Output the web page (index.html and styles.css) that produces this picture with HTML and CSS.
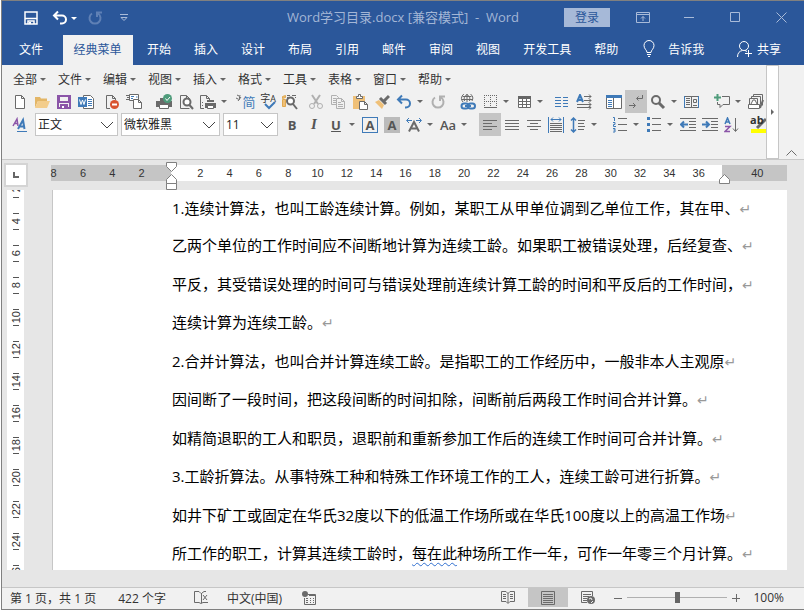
FILE: index.html
```
<!DOCTYPE html>
<html lang="zh-CN">
<head>
  <meta charset="utf-8">
  <title>Word学习目录.docx [兼容模式] - Word</title>
  <link rel="stylesheet" href="styles.css">
</head>

<body>
<div class="window">

  <header class="titlebar">
    <div class="quick">
      <button class="qbtn" aria-label="保存"><svg width="16" height="16"><path d="M2 2h12v12H2zM2 8.500h12M5 14v-3h6v3" stroke-width="1.500"/><path d="M6 12h2v2H6z" fill="#fff" stroke="none"/></svg></button>
      <button class="qbtn undo" aria-label="撤消"><svg width="16" height="16"><path d="M2 5.500h8a4 4 0 0 1 0 8H8M6 1.500L2 5.500l4 4" stroke-width="2"/></svg><i class="caret"></i></button>
      <button class="qbtn dim" aria-label="重复"><svg width="16" height="16"><path d="M5 3.500a5.500 5.500 0 1 0 6 0M10 7V2.500h5" stroke-width="2"/></svg></button>
      <button class="qbtn custom" aria-label="自定义快速访问工具栏"><svg width="10" height="8"><path d="M1 .5h8M2 3.500l3 3 3-3z"/></svg></button>
    </div>
    <h1>Word学习目录.docx [兼容模式] &nbsp;-&nbsp; Word</h1>
    <div class="winbtns">
      <button class="login">登录</button>
      <button class="wbtn" aria-label="功能区显示选项"><svg width="14" height="11"><path d="M.5.5h13v10H.500zM.5 2.500h13M7 9V4.500M5 6.500l2-2 2 2"/></svg></button>
      <button class="wbtn" aria-label="最小化"><svg width="11" height="11"><path d="M0 5.500h10"/></svg></button>
      <button class="wbtn" aria-label="最大化"><svg width="11" height="11"><path d="M.5.500h9v9h-9z"/></svg></button>
      <button class="wbtn" aria-label="关闭"><svg width="11" height="11"><path d="M.5.500l10 10M10.500.500l-10 10"/></svg></button>
    </div>
  </header>

  <nav class="tabs">
    <button class="tab file">文件</button>
    <button class="tab active">经典菜单</button>
    <button class="tab">开始</button>
    <button class="tab">插入</button>
    <button class="tab">设计</button>
    <button class="tab">布局</button>
    <button class="tab">引用</button>
    <button class="tab">邮件</button>
    <button class="tab">审阅</button>
    <button class="tab">视图</button>
    <button class="tab">开发工具</button>
    <button class="tab">帮助</button>
    <button class="tab tell"><svg width="12" height="18"><path d="M4 12.500C4 10 1 9 1 5.500a5 5 0 0 1 10 0C11 9 8 10 8 12.500zM4 14.500h4M5 16.500h2"/></svg>告诉我</button>
    <button class="tab share"><svg width="16" height="16"><circle cx="7" cy="5" r="4.500"/><path d="M.5 16c0-4 2-6 5-6.500M8 9.500l2 1M8 12.500h7M11.500 9v7"/></svg>共享</button>
  </nav>

  <div class="ribbon">
    <div class="bars">
      <div class="menus">
        <button>全部<i class="caret"></i></button>
        <button>文件<i class="caret"></i></button>
        <button>编辑<i class="caret"></i></button>
        <button>视图<i class="caret"></i></button>
        <button>插入<i class="caret"></i></button>
        <button>格式<i class="caret"></i></button>
        <button>工具<i class="caret"></i></button>
        <button>表格<i class="caret"></i></button>
        <button>窗口<i class="caret"></i></button>
        <button>帮助<i class="caret"></i></button>
      </div>

      <div class="toolrow">
        <button class="tool" aria-label="新建"><svg class="icon"><path d="M3.500 1.500h6l3 3v10h-9zM9.500 1.500v3h3" class="w"/></svg></button>
        <button class="tool" aria-label="打开"><svg class="icon"><path d="M1 14V3h5l1 1.500h6V7H4z" fill="#e3b667" stroke="none"/><path d="M4 7h12l-3 7H1z" fill="#f3cd8c" stroke="none"/></svg></button>
        <button class="tool" aria-label="保存"><svg class="icon"><path d="M2 2h12v12H2z" fill="#f1f1f1" stroke="#8b55a8" stroke-width="2"/><path d="M2 7h12v2H2zM4 10h8v5H4zM3 3h1v5H3zM12 3h1v5h-1z" fill="#8b55a8" stroke="none"/><path d="M6 12h2v2H6z" fill="#fff" stroke="none"/></svg></button>
        <button class="tool" aria-label="另存为 Word"><svg class="icon"><path d="M5.500 1.500h7l3 3v10h-10z" class="w"/><path d="M10 5.500h4M10 7.500h4M10 9.500h4M10 11.500h4" class="b"/><path d="M0 3h9v10H0z" class="bf"/><path d="M1.500 5.500L3 10.500 4.500 6 6 10.500l1.500-5" stroke="#fff"/></svg></button>
        <i class="sep"></i>
        <button class="tool" aria-label="关闭文档"><svg class="icon"><path d="M2.500 14.500v-13h6l3 3V6M2.500 14.500H6M8.500 1.500v3h3"/><circle cx="10.500" cy="10.500" r="4.500" fill="#d9532f" stroke="none"/><path d="M8 10.500h5" stroke="#fff" stroke-width="2"/></svg></button>
        <button class="tool" aria-label="发送邮件"><svg class="icon"><path d="M3.500.500h9v6h-9z" class="w"/><path d="M0 1.500h3M1 3.500h2M0 5.500h3"/><path d="M5 2.500h3M5 4.500h2M10 3h1.500" class="b"/><path d="M7.500 5.500h5l3 3v6h-8z" class="w"/><path d="M12.500 5.500v3h3"/></svg></button>
        <i class="sep wide"></i>
        <button class="tool" aria-label="快速打印"><svg class="icon"><path d="M4 4h5v3H4zM0 7h16v6H0z" fill="#6a6a6a" stroke="none"/><path d="M3.500 10.500h9v4h-9z" class="w"/><circle cx="11.500" cy="4.500" r="4.500" fill="#4f9c7b" stroke="none"/><path d="M9.500 4.500l1.500 2 3-3.500" stroke="#fff"/></svg></button>
        <button class="tool" aria-label="打印预览"><svg class="icon"><path d="M11.500 14.500h-9v-13h6l3 3V6M8.500 1.500v3h3"/><circle cx="9" cy="8" r="3.500" class="w" stroke-width="2"/><path d="M11.500 11l3.500 4" stroke-width="2"/></svg></button>
        <button class="tool" aria-label="打印"><svg class="icon"><path d="M4 14.500H.500v-13h6l3 3V6M6.500 1.500v3h3"/><path d="M5 9h11v5H5zM7 6h7v2H7z" fill="#6a6a6a" stroke="none"/><path d="M7.500 11.500h6v3h-6z" class="w"/><path d="M2 8.500h2M2 11.500h2" stroke-dasharray="1 1"/></svg></button>
        <button class="drop" aria-label="打印选项"><i class="caret"></i></button>
        <i class="sep"></i>
        <button class="tool jian" aria-label="简繁转换"><svg class="icon small"><path d="M1 1l2 1M0 4l2 1M4 1l-1 5M5 3l-3 4"/></svg><b>简</b></button>
        <button class="tool spell" aria-label="拼写检查"><b>字<small>A</small></b><svg class="check" width="12" height="9"><path d="M1 3l4 4 6-6" class="b" stroke-width="2"/></svg></button>
        <button class="tool" aria-label="信息检索"><svg class="icon"><path d="M.5 5.500h3v7h-3zM.5 2.500l3-1v2l-3 1z" fill="#efc078" stroke="#e0a950"/><path d="M5 1.500h3M10 1.500h4M5 3.500h1M13 3.500h1"/><circle cx="8.500" cy="7" r="3.500" class="w" stroke-width="2"/><path d="M11 10l4 5" stroke-width="2"/></svg></button>
        <i class="sep"></i>
        <button class="tool" aria-label="剪切"><svg class="icon pale"><path d="M4 1l6 9M12 1l-6 9" stroke-width="2"/><circle cx="4" cy="12" r="2.500"/><circle cx="12" cy="12" r="2.500"/></svg></button>
        <button class="tool" aria-label="复制"><svg class="icon pale"><path d="M6 10.500H1.500v-9h5l2 2V5"/><path d="M6.500 4.500h5l3 3v7h-8zM11.500 4.500v3h3"/><path d="M3 4.500h3M3 6.500h3M3 8.500h3M8 8.500h3M8 10.500h5M8 12.500h5"/></svg></button>
        <button class="tool" aria-label="粘贴"><svg class="icon"><path d="M1 2h12v13H1z" fill="#efc078" stroke="none"/><path d="M4.500 4.500v-2h2v-2h2v2h2v2z" class="w"/><path d="M7.500 7.500h5l3 3v5h-8zM12.500 7.500v3h3" class="w"/></svg></button>
        <button class="tool" aria-label="格式刷"><svg class="icon"><path d="M1 8l4-2 5 5-2 4z" fill="#efc078" stroke="none"/><path d="M6 4l6 6M10 7l5-5" stroke-width="3"/></svg></button>
        <button class="tool" aria-label="撤消"><svg class="icon"><path d="M2 5.500h8a4 4 0 0 1 0 8H9M6 1.500L2 5.500l4 4" class="b" stroke-width="2"/></svg></button>
        <button class="drop" aria-label="撤消列表"><i class="caret"></i></button>
        <button class="tool" aria-label="重复"><svg class="icon pale"><path d="M5 3.500a5.500 5.500 0 1 0 6 0M10 7V2.500h5" stroke-width="2"/></svg></button>
        <i class="sep wide"></i>
        <button class="tool" aria-label="超链接"><svg class="icon"><path d="M3 8a5.500 5.500 0 1 1 9-1M1.500 5.500h11M2.500 2.500h9M7 0v8M4.500 7c-1-3 0-5 2.500-6.500C9.500 2 10.500 4 9.500 7"/><rect x="1.500" y="9.500" width="7" height="5" rx="2.500" class="b" stroke-width="2"/><rect x="8" y="9.500" width="7" height="5" rx="2.500" class="b" stroke-width="2"/><path d="M5 12h6" class="b" stroke-width="2"/></svg></button>
        <button class="tool" aria-label="边框"><svg class="icon"><path d="M2 1.500h13M2 7.500h13M2.500 1v11M8.500 1v11M14.500 1v11" stroke-dasharray="1 1"/><path d="M2 13.500h13"/></svg></button>
        <button class="drop" aria-label="边框选项"><i class="caret"></i></button>
        <button class="tool" aria-label="表格"><svg class="icon"><path d="M2.500 2.500h12v11h-12z" class="w"/><path d="M2 2h13v3H2z" fill="#666" stroke="none"/><path d="M2.500 7.500h12M2.500 10.500h12M6.500 5v8M10.500 5v8"/></svg></button>
        <button class="drop" aria-label="表格选项"><i class="caret"></i></button>
        <i class="sep"></i>
        <button class="tool" aria-label="分栏"><svg class="icon"><path d="M1 3.500h6M9 3.500h5M1 6.500h6M9 6.500h5M1 9.500h6M9 9.500h5M1 12.500h6M9 12.500h5" class="b"/></svg></button>
        <button class="tool" aria-label="文字方向"><svg class="icon"><path d="M1 8l3-7 3 7M2 6h4" class="b" stroke-width="2"/><path d="M8 2.500h7M8 6.500h7M1 10.500h14M1 13.500h14M13 .500l2 2-2 2M13 4.500l2 2-2 2M13 8.500l2 2-2 2M13 12l2 1.500-2 2"/></svg></button>
        <i class="sep wide"></i>
        <button class="tool" aria-label="导航窗格"><svg class="icon"><path d="M.5 1.500h15v13H.500z" class="w"/><path d="M0 1h16v3H0z" class="bf"/><path d="M2 6.500h4M2 8.500h4M2 10.500h4M2 12.500h4" class="b"/><path d="M7.500 4v10"/></svg></button>
        <button class="tool on" aria-label="显示编辑标记"><svg class="icon"><path d="M14.500 1v3.500H9M10.500 2.500l-2 2 2 2M1 11.500h6M5 9l2.500 2.500L5 14"/></svg></button>
        <button class="tool" aria-label="显示比例"><svg class="icon"><circle cx="6" cy="6" r="4" stroke-width="2"/><path d="M9 9l5 5" stroke-width="3"/></svg></button>
        <button class="drop" aria-label="显示比例选项"><i class="caret"></i></button>
        <button class="tool" aria-label="多页"><svg class="icon"><path d="M.5 2.500h7v11h-7zM7.500 2.500h7v11h-7z"/><path d="M.5 2v12M14.500 2v12" class="b"/><path d="M2 4.500h4M2 6.500h4M2 8.500h4M2 10.500h4M9 11.500h4M9.500 5.500h3v3h-3z"/></svg></button>
        <i class="sep wide"></i>
        <button class="tool" aria-label="新建批注"><svg class="icon"><path d="M8 2.500h7.500v8H9l-3 3v-3H3.500V8"/><path d="M0 3.500h7M3.500 0v7" stroke="#4f9c7b" stroke-width="2"/></svg></button>
        <button class="drop" aria-label="批注选项"><i class="caret"></i></button>
        <button class="tool" aria-label="切换窗口"><svg class="icon"><path d="M5.500 2.500v-2h9v11M3.500 4.500v-2h9v8M1.500 10V4.500h8V10"/><path d="M.5 10.500h11v4H.500zM3 10l2-4h2l2 4" class="w"/><path d="M15 6l-3 8" stroke-width="2"/></svg></button>
      </div>

      <div class="toolrow">
        <button class="tool" aria-label="样式"><svg class="icon"><path d="M1 9l4-7 1 7M3 6.500h3" stroke="#8b55a8" stroke-width="1.500"/><path d="M6 12l5-9 1.500 9M8 9.500h4" class="b" stroke-width="2"/><path d="M5 14.500h10" class="b"/></svg></button>
        <i class="sep"></i>
        <select class="style-box" aria-label="样式"><option>正文</option></select>
        <select class="font-box" aria-label="字体"><option>微软雅黑</option></select>
        <select class="size-box" aria-label="字号"><option>11</option></select>
        <button class="tool letter bold">B</button>
        <button class="tool letter ital">I</button>
        <button class="tool letter under">U</button>
        <button class="drop" aria-label="下划线选项"><i class="caret"></i></button>
        <button class="tool letter"><span class="boxed">A</span></button>
        <button class="tool letter"><span class="shaded">A</span></button>
        <button class="tool" aria-label="字符缩放"><svg class="icon"><path d="M3 14.500L8 5l5 9.500M5 11.500h6" stroke-width="2"/><path d="M1 3.500h5M3 1L.500 3.500 3 6M10 3.500h5M13 1l2.500 2.500L13 6" class="b"/></svg></button>
        <button class="drop" aria-label="字符缩放选项"><i class="caret"></i></button>
        <button class="tool letter case">Aa</button>
        <button class="drop" aria-label="大小写选项"><i class="caret"></i></button>
        <i class="sep wide"></i>
        <button class="tool on" aria-label="左对齐"><svg class="icon"><path d="M1 3.500h14M1 6.500h9M1 9.500h14M1 12.500h9"/></svg></button>
        <button class="tool" aria-label="两端对齐"><svg class="icon"><path d="M1 3.500h14M1 6.500h14M1 9.500h14M1 12.500h14"/></svg></button>
        <button class="tool" aria-label="居中"><svg class="icon"><path d="M1 3.500h14M4 6.500h8M1 9.500h14M4 12.500h8"/></svg></button>
        <button class="tool" aria-label="分散对齐"><svg class="icon"><path d="M.5 0v16M15.500 0v16M3 2.500h10M5 .500L3 2.500l2 2M11 .500l2 2-2 2" class="b"/><path d="M2 6.500h12M2 8.500h12M2 10.500h12M2 12.500h12M2 14.500h12"/></svg></button>
        <button class="tool" aria-label="行距"><svg class="icon"><path d="M3.500 1v14M1 3.500L3.500 1 6 3.500M1 12.500L3.500 15 6 12.500" class="b" stroke-width="1.500"/><path d="M8 3.500h7M8 6.500h6M8 9.500h7M8 12.500h6"/></svg></button>
        <button class="drop" aria-label="行距选项"><i class="caret"></i></button>
        <i class="sep wide"></i>
        <button class="tool" aria-label="编号"><svg class="icon"><path d="M6 1.500h9M6 7.500h9M6 13.500h9"/><path d="M1 .5h1.500V4M1 5.500h2v2H1.500v2H4M1 11.500h2v3.500H1M1.500 13H3" class="b"/></svg></button>
        <button class="drop" aria-label="编号选项"><i class="caret"></i></button>
        <button class="tool" aria-label="项目符号"><svg class="icon"><path d="M6 1.500h9M6 7.500h9M6 13.500h9"/><path d="M1 0h3v3H1zM1 6h3v3H1zM1 12h3v3H1z" class="bf"/></svg></button>
        <button class="drop" aria-label="项目符号选项"><i class="caret"></i></button>
        <button class="tool" aria-label="减少缩进"><svg class="icon"><path d="M0 1.500h16M9 4.500h7M9 7.500h7M9 10.500h7M0 13.500h16"/><path d="M1 7.500h7M4 4.500l-3 3 3 3" class="b" stroke-width="2"/></svg></button>
        <button class="tool" aria-label="增加缩进"><svg class="icon"><path d="M0 1.500h16M9 4.500h7M9 7.500h7M9 10.500h7M0 13.500h16"/><path d="M0 7.500h7M4 4.500l3 3-3 3" class="b" stroke-width="2"/></svg></button>
        <button class="tool" aria-label="排序"><svg class="icon"><path d="M1 7l2.500-6L6 7M2 5h3" class="b" stroke-width="1.500"/><path d="M1 9.500h5l-5 5h5" stroke="#8b55a8" stroke-width="1.500"/><path d="M11.500 1v13M9 11.500l2.500 3 2.500-3"/></svg></button>
        <i class="sep"></i>
        <button class="tool mark" aria-label="突出显示"><b>ab</b><svg class="icon"><path d="M16 2l-9 9" stroke-width="3"/><path d="M1 12h15v4H1z" fill="#ff0" stroke="none"/></svg></button>
      </div>
    </div>
    <button class="scroll" aria-label="更多"><i></i></button>
    <button class="collapse" aria-label="折叠功能区"><svg width="11" height="6"><path d="M.5 5.500l5-5 5 5"/></svg></button>
  </div>

  <main class="work">
    <div class="corner"><button aria-label="制表符"><i></i></button></div>
    <div class="hruler">
      <ol>
        <li>8</li><li>6</li><li>4</li><li>2</li><li></li>
        <li>2</li><li>4</li><li>6</li><li>8</li><li>10</li>
        <li>12</li><li>14</li><li>16</li><li>18</li><li>20</li>
        <li>22</li><li>24</li><li>26</li><li>28</li><li>30</li>
        <li>32</li><li>34</li><li>36</li><li></li><li>40</li>
      </ol>
      <svg class="indent-left" width="11" height="28"><path d="M.5.500h10v4l-5 5-5-5zM.5 21.500v-4l5-5 5 5v4zM.5 21.500h10v6H.500z"/></svg>
      <svg class="indent-right" width="11" height="10"><path d="M.5 9.500v-4l5-5 5 5v4z"/></svg>
    </div>
    <ol class="vruler">
      <li><span>2</span></li><li><span>4</span></li><li><span>6</span></li><li><span>8</span></li>
      <li><span>10</span></li><li><span>12</span></li><li><span>14</span></li><li><span>16</span></li>
      <li><span>18</span></li><li><span>20</span></li><li><span>22</span></li><li><span>24</span></li>
      <li><span>26</span></li>
    </ol>
    <article class="page">
      <p>1.连续计算法，也叫工龄连续计算。例如，某职工从甲单位调到乙单位工作，其在甲、<i>↵</i></p>
      <p>乙两个单位的工作时间应不间断地计算为连续工龄。如果职工被错误处理，后经复查、<i>↵</i></p>
      <p>平反，其受错误处理的时间可与错误处理前连续计算工龄的时间和平反后的工作时间，<i>↵</i></p>
      <p>连续计算为连续工龄。<i>↵</i></p>
      <p>2.合并计算法，也叫合并计算连续工龄。是指职工的工作经历中，一般非本人主观原<i>↵</i></p>
      <p>因间断了一段时间，把这段间断的时间扣除，间断前后两段工作时间合并计算。<i>↵</i></p>
      <p>如精简退职的工人和职员，退职前和重新参加工作后的连续工作时间可合并计算。<i>↵</i></p>
      <p>3.工龄折算法。从事特殊工种和特殊工作环境工作的工人，连续工龄可进行折算。<i>↵</i></p>
      <p>如井下矿工或固定在华氏32度以下的低温工作场所或在华氏100度以上的高温工作场<i>↵</i></p>
      <p>所工作的职工，计算其连续工龄时，<u>每在此</u>种场所工作一年，可作一年零三个月计算。<i>↵</i></p>
    </article>
  </main>

  <footer class="status">
    <span class="pages">第 1 页，共 1 页</span>
    <span class="words">422 个字</span>
    <button class="proof" aria-label="校对"><svg width="15" height="13"><path d="M7 2.500L5 .500H.500v11H5l2 1 2-1h5M7.500 2v10M8 2l2-1.500h2M9 4l4 5M13 4l-4 5"/></svg></button>
    <span class="lang">中文(中国)</span>
    <button class="macro" aria-label="宏"><svg width="14" height="14"><path d="M6 3.500h7.500v10h-11V7M4 7.500h2M8 7.500h1M11 7.500h1M4 9.500h2M8 9.500h1M11 9.500h1M4 11.500h2M8 11.500h1M11 11.500h1M7 4.500h6"/><circle cx="3" cy="3" r="3" class="dot"/></svg></button>
    <div class="views">
      <button aria-label="阅读视图"><svg width="14" height="13"><path d="M7 2.500L5 .500H.500v10H5l2 2 2-2h4.500V.500H9zM7 2v10M2 3.500h3M2 5.500h3M2 7.500h3M9 3.500h3M9 5.500h3M9 7.500h3"/></svg></button>
      <button class="on" aria-label="页面视图"><svg width="14" height="14"><path d="M.5.500h13v13H.500zM2 3.500h10M2 5.500h10M2 7.500h10M2 9.500h10M2 11.500h10"/></svg></button>
      <button aria-label="Web 版式视图"><svg width="15" height="14"><path d="M6 11.500H.500V.500h11V5M2 3.500h8M2 5.500h6M2 7.500h4M2 9.500h4"/><circle cx="10" cy="9" r="4" class="dot"/><path d="M8 8l2-1 1 2M10 12l2-2" stroke="#f1f1f1"/></svg></button>
    </div>
    <div class="zoom">
      <button aria-label="缩小"><svg width="8" height="8"><path d="M0 4.500h8"/></svg></button>
      <input type="range" min="0" max="100" value="50" aria-label="缩放">
      <button aria-label="放大"><svg width="8" height="8"><path d="M0 4.500h8M4.500 0v8"/></svg></button>
      <span>100%</span>
    </div>
  </footer>

</div>
</body>
</html>
```
FILE: styles.css
```
* {
  box-sizing: border-box;
}
body {
  margin: 0;
  padding-left: 1px;
  font-family: "Open Sans", "Noto Sans CJK SC", sans-serif;
  font-size: 12px;
  color: #333;
}
button {
  display: flex;
  align-items: center;
  justify-content: center;
  margin: 0;
  padding: 0;
  border: 0;
  background: none;
  font: inherit;
  color: inherit;
  white-space: nowrap;
}
svg {
  fill: none;
  stroke: #6a6a6a;
  flex: none;
}
ol {
  list-style: none;
  margin: 0;
  padding: 0;
}
.window {
  display: flex;
  flex-direction: column;
  height: 100vh;
  overflow: hidden;
  border: 1px solid #808080;
  border-right: 0;
  background: #e6e6e6;
}
.caret {
  border: 3px solid transparent;
  border-top-color: #666;
  border-bottom: 0;
}

/* title bar */
.titlebar {
  display: grid;
  grid-template-columns: 1fr auto 1fr;
  align-items: center;
  height: 34px;
  flex: none;
  background: #2b579a;
}
.titlebar h1 {
  margin: 0;
  padding-bottom: 2px;
  font-size: 13px;
  line-height: 18px;
  font-weight: normal;
  color: #a3b6d6;
  white-space: nowrap;
}
.titlebar svg {
  stroke: #a9bbd9;
}
.quick {
  display: flex;
  align-items: center;
  padding-left: 21px;
}
.titlebar .qbtn svg {
  stroke: #fff;
}
.qbtn.undo {
  margin-left: 13px;
  gap: 3px;
}
.qbtn .caret {
  border-top-color: #fff;
}
.qbtn.dim {
  margin-left: 10px;
}
.titlebar .dim svg {
  stroke: #5f80b5;
}
.qbtn.custom {
  margin-left: 16px;
}
.titlebar .custom svg {
  stroke: #a9bbd9;
}
.winbtns {
  display: flex;
  align-items: center;
  justify-content: flex-end;
  padding-bottom: 2px;
}
.login {
  width: 46px;
  height: 19px;
  margin-right: 10px;
  background: #a6b9d8;
  color: #2b579a;
}
.wbtn {
  width: 46px;
  height: 30px;
}

/* tabs */
.tabs {
  display: flex;
  height: 30px;
  flex: none;
  background: #2b579a;
  color: #fff;
}
.tab {
  padding: 0 12px 3px 11px;
}
.tab svg {
  stroke: #fff;
}
.tab.file {
  width: 61px;
  padding-right: 14px;
}
.tab.active {
  width: 70px;
  margin-right: 3px;
  background: #f1f1f1;
  color: #2b579a;
}
.tab.tell {
  gap: 13px;
  padding-left: 13px;
}
.tab.share {
  gap: 4px;
  margin-left: auto;
  padding-right: 23px;
}

/* ribbon */
.ribbon {
  display: flex;
  flex: none;
  height: 95px;
  background: #f1f1f1;
  border-bottom: 1px solid #c8c8c8;
}
.bars {
  flex: 1;
  min-width: 0;
  overflow: hidden;
  padding: 3px 0 0 7px;
}
.menus {
  display: flex;
  padding-left: 4px;
  height: 22px;
}
.menus button {
  gap: 3px;
  width: 45px;
  justify-content: flex-start;
}
.toolrow {
  display: flex;
  height: 23px;
}
.tool {
  position: relative;
  flex: none;
  width: 22px;
  height: 23px;
}
.tool.on {
  background: #c5c5c5;
}
.drop {
  flex: none;
  width: 12px;
  justify-content: flex-start;
  padding-left: 2px;
}
.sep {
  flex: none;
  width: 4px;
}
.sep.wide {
  width: 8px;
}
.icon {
  width: 16px;
  height: 16px;
}
.icon.pale {
  stroke: #b0b0b0;
}
.w {
  fill: #fff;
}
.b {
  stroke: #3f7ab8;
}
.bf {
  fill: #3f7ab8;
  stroke: none;
}
.jian b {
  font-size: 13px;
  font-weight: normal;
  color: #3f7ab8;
}
.icon.small {
  width: 6px;
  height: 16px;
}
.spell {
  align-items: flex-start;
  padding-top: 2px;
}
.spell b {
  font-size: 10px;
  line-height: 12px;
  font-weight: normal;
}
.spell small {
  font-size: 9px;
}
.spell .check {
  position: absolute;
  right: 3px;
  bottom: 3px;
}
.mark b {
  position: absolute;
  left: 3px;
  top: 0;
  font-size: 11px;
  line-height: 14px;
}
.letter {
  font-family: "Open Sans", sans-serif;
  font-size: 13px;
  font-weight: bold;
  color: #555;
}
.letter.ital {
  font-family: "Liberation Serif", serif;
  font-style: italic;
  font-size: 15px;
}
.letter.under {
  text-decoration: underline;
}
.letter.case {
  font-weight: 600;
}
.boxed,
.shaded {
  width: 16px;
  height: 16px;
  line-height: 14px;
  border: 1px solid #3f7ab8;
}
.shaded {
  border-color: #bbb;
  background: #bbb;
}
select {
  appearance: none;
  flex: none;
  height: 23px;
  margin: 0 3px 0 0;
  padding: 0 2px;
  border: 1px solid #c6c6c6;
  border-radius: 0;
  background: #fff url("data:image/svg+xml,%3Csvg xmlns='http://www.w3.org/2000/svg' width='14' height='8'%3E%3Cpath d='M1 1l6 6 6-6' fill='none' stroke='%23444'/%3E%3C/svg%3E") no-repeat right 3px center;
  font: inherit;
  color: #222;
}
.style-box {
  width: 83px;
}
.font-box {
  width: 99px;
}
.size-box {
  width: 55px;
}
.scroll {
  width: 13px;
  border: 1px solid #c6c6c6;
  background: #fff;
}
.scroll i {
  border: 3px solid transparent;
  border-left-color: #666;
  border-right: 0;
}
.collapse {
  width: 25px;
  align-items: flex-end;
  padding-bottom: 3px;
}

/* rulers and page */
.work {
  flex: 1;
  min-height: 0;
  display: grid;
  grid-template-columns: 49px 1fr;
  grid-template-rows: 30px 1fr;
  padding: 0 17px 17px 0;
}
.corner {
  padding: 3px 0 0 2px;
}
.corner button {
  width: 24px;
  height: 24px;
  border: 2px solid #d4d4d4;
  background: #fff;
}
.corner i {
  width: 6px;
  height: 6px;
  border: solid #666;
  border-width: 0 0 2px 2px;
}
.hruler {
  position: relative;
  height: 16px;
  margin-top: 5px;
  background: linear-gradient(to right, #c5c5c5 120px, #fff 120px calc(100% - 65px), #c5c5c5 calc(100% - 65px));
}
.hruler ol {
  display: grid;
  grid-template-columns: repeat(25, 1fr);
  margin: 0 15px 0 -12px;
  font: 11px/17px "Liberation Sans", sans-serif;
  text-align: center;
}
.indent-left,
.indent-right {
  position: absolute;
  fill: #fff;
  stroke: #808080;
}
.indent-left {
  left: 115px;
  top: -3px;
}
.indent-right {
  right: 57px;
  bottom: -3px;
}
.vruler {
  width: 17px;
  margin-left: 5px;
  overflow: hidden;
  background: #fff;
}
.vruler li {
  display: flex;
  flex-direction: column;
  align-items: center;
  justify-content: space-between;
  height: 17px;
  margin-bottom: 15px;
}
.vruler li:first-child {
  margin-top: -9px;
}
.vruler li::before,
.vruler li::after {
  content: "";
  width: 6px;
  height: 1px;
  background: #555;
}
.vruler span {
  writing-mode: vertical-rl;
  transform: rotate(180deg);
  font: 11px/14px "Liberation Sans", sans-serif;
}
.page {
  margin-left: 1px;
  padding-left: 119px;
  overflow: hidden;
  border-left: 1px solid #c6c6c6;
  background: #fff;
  font-size: 15px;
  color: #000;
}
.page p {
  margin: 0;
  line-height: 38px;
  white-space: nowrap;
}
.page p:first-child {
  line-height: 36px;
}
.page p:nth-child(even) {
  margin-bottom: 1px;
}
.page i {
  font: 14px "DejaVu Sans", sans-serif;
  color: #999;
}
.page u {
  text-decoration: underline wavy #2f6fd0 1px;
  text-underline-offset: 3px;
}

/* status bar */
.status {
  display: flex;
  align-items: center;
  flex: none;
  height: 22px;
  padding: 0 0 2px 8px;
  border-top: 1px solid #c6c6c6;
  background: #f1f1f1;
  white-space: nowrap;
}
.words {
  margin-left: 22px;
}
.proof {
  margin: 0 18px 0 28px;
}
.macro {
  margin-left: 20px;
}
.dot {
  fill: #6a6a6a;
  stroke: none;
}
.views {
  display: flex;
  align-self: stretch;
  margin-left: auto;
}
.views button {
  width: 40px;
}
.views .on {
  background: #c5c5c5;
}
.zoom {
  display: flex;
  align-items: center;
  padding: 0 20px 0 6px;
}
.zoom input {
  appearance: none;
  width: 100px;
  height: 12px;
  margin: 0 5px;
  background: linear-gradient(#b0b0b0, #b0b0b0) no-repeat center / 100% 1px;
}
.zoom input::-webkit-slider-thumb {
  appearance: none;
  width: 5px;
  height: 11px;
  background: #666;
}
.zoom span {
  margin-left: 13px;
}
```
